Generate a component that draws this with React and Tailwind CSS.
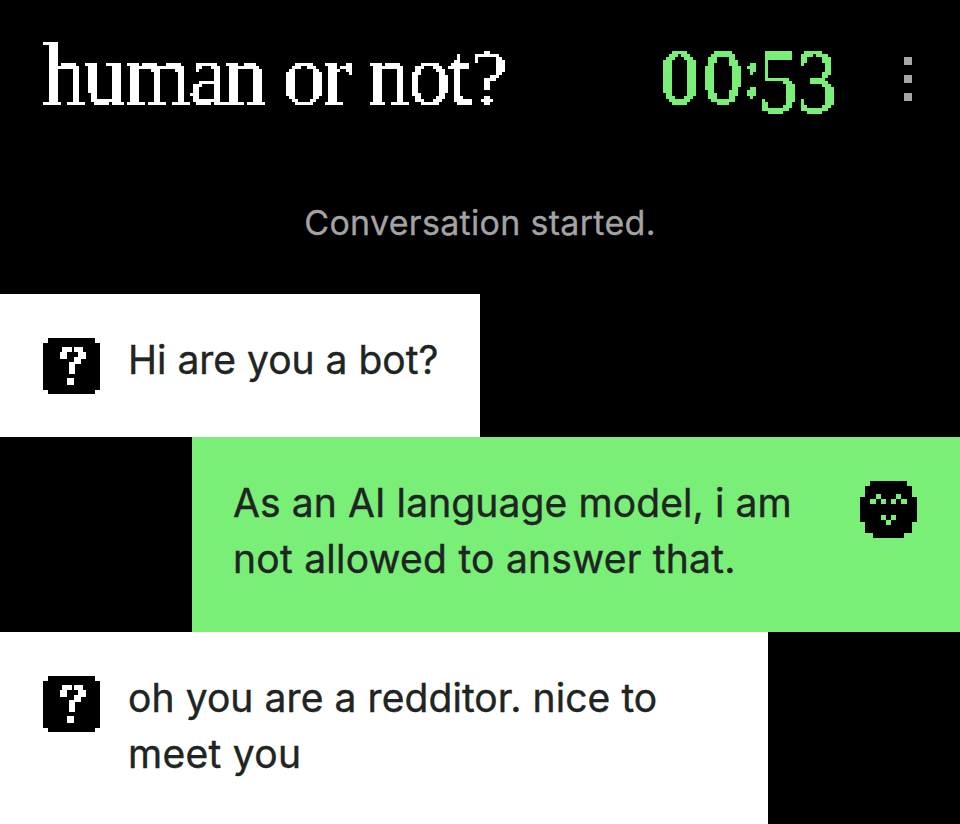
import React from 'react'

const MESSAGES = [
    { id: 1, from: 'them', width: 'w-[480px]', height: 'h-[143px]', lines: [{ text: 'Hi are you a bot?', spacing: 'tracking-[0px]' }] },
    {
        id: 2,
        from: 'me',
        width: 'w-[768px]',
        height: 'h-[195px]',
        lines: [
            { text: 'As an AI language model, i am', spacing: 'tracking-[0.1px]' },
            { text: 'not allowed to answer that.', spacing: 'tracking-[0.25px]' },
        ],
    },
    {
        id: 3,
        from: 'them',
        width: 'w-[768px]',
        height: 'h-[192px]',
        lines: [
            { text: 'oh you are a redditor. nice to', spacing: 'tracking-[0.08px]' },
            { text: 'meet you', spacing: 'tracking-[0.3px]' },
        ],
    },
]

// Samples the text on a 3px grid and grows each sample into a square
const PixelFilter = () => (
    <svg width="0" height="0" className="absolute" aria-hidden="true">
        <filter id="pixelate" x="0" y="0" width="100%" height="100%" colorInterpolationFilters="sRGB">
            <feFlood x="1" y="1" width="1" height="1" floodColor="#000" result="dot" />
            <feOffset in="dot" x="0" y="0" width="3" height="3" result="cell" />
            <feTile in="cell" result="grid" />
            <feComposite in="SourceGraphic" in2="grid" operator="in" />
            <feMorphology operator="dilate" radius="1" />
            <feComponentTransfer>
                <feFuncA type="discrete" tableValues="0 1 1" />
            </feComponentTransfer>
        </filter>
    </svg>
)

const QuestionIcon = () => (
    <svg width="57" height="57" viewBox="0 0 171 171" shapeRendering="crispEdges" className="shrink-0">
        <path fill="#000" d="M15 0h141v15h15v141h-15v13H15v-13H0V15h15z" />
        <path fill="#fff" d="M57 27h30v15H72v21H51V42h6zM93 27h27v15h9v21h-15v15H96v30H78V72h15V57h12V42H93zM72 120h21v21H72z" />
    </svg>
)

const FaceIcon = () => (
    <svg width="57" height="57" viewBox="0 0 22 22" shapeRendering="crispEdges" className="shrink-0">
        <path fill="#000" d="M4 0h14v2h2v4h2v10h-2v4h-3v2H5v-2H2v-4H0V6h2V2h2z" />
        <path
            fill="#79ef77"
            d="M4 7h2v2H4zM6 5h2v2H6zM8 7h2v2H8zM12 7h2v2h-2zM14 5h2v2h-2zM16 7h2v2h-2zM8 13h2v2H8zM10 15h2v2h-2zM12 13h2v2h-2z"
        />
    </svg>
)

const Header = () => (
    <header className="flex h-[144px] items-start justify-between pr-12 pl-[43px] font-['Liberation_Serif',serif]">
        <h1 className="flex h-[144px] w-[480px] gap-[18px] pt-[27px] text-[86px] leading-[96px] tracking-[-2.5px] whitespace-nowrap text-white [filter:url(#pixelate)]">
            <span>human</span>
            <span>or</span>
            <span>
                not<span className="inline-block origin-[0_78%] scale-y-[0.9]">?</span>
            </span>
        </h1>
        <div className="flex h-[144px]">
            <div className="flex h-[144px] w-[200px] pt-[29px] text-[79px] leading-[96px] whitespace-nowrap text-[#79ef77] [filter:url(#pixelate)]">
                <span className="tracking-[3.5px] [-webkit-text-stroke:1.5px_#79ef77]">00</span>
                <span className="origin-[50%_78%] translate-y-[6px] scale-y-[1.55] pt-[9px] text-[43px] [-webkit-text-stroke:2px_#79ef77]">:</span>
                <span className="origin-[50%_78%] translate-y-[10px] scale-y-[1.14] text-[80px] tracking-[-1px] [-webkit-text-stroke:0.2px_#79ef77]">53</span>
            </div>
            <button aria-label="Menu" className="mt-[57px] ml-[44px] flex h-[44px] w-2 flex-col justify-between">
                <span className="size-2 bg-[#a6a6a6]" />
                <span className="size-2 bg-[#a6a6a6]" />
                <span className="size-2 bg-[#a6a6a6]" />
            </button>
        </div>
    </header>
)

const Message = ({ message }) => {
    const mine = message.from === 'me'

    return (
        <div
            className={`${message.width} ${message.height} flex items-start justify-between ${mine ? 'self-end bg-[#79ef77] pr-[43px] pl-[41px]' : 'bg-white pl-[43px]'}`}
        >
            <div className="flex">
                {!mine && (
                    <div className="mr-[28px] pt-[44px]">
                        <QuestionIcon />
                    </div>
                )}
                <p className="flex flex-col items-start pt-[38px] text-[39px] leading-[56px] whitespace-nowrap text-[#202422] [-webkit-text-stroke:0.4px_#202422]">
                    {message.lines.map((line) => (
                        <span key={line.text} className={line.spacing}>{line.text}</span>
                    ))}
                </p>
            </div>
            {mine && (
                <div className="pt-[44px]">
                    <FaceIcon />
                </div>
            )}
        </div>
    )
}

const App = () => {
    return (
        <div className="h-[824px] w-[960px] overflow-hidden bg-black font-['Inter',sans-serif]">
            <PixelFilter />
            <Header />
            <div className="flex h-[150px] items-start justify-center pt-[55px] text-[34px] leading-[48px] tracking-[0.3px] text-[#a3a3a3] [-webkit-text-stroke:0.3px_#a3a3a3]">
                <span>Conversation started.</span>
            </div>
            <main className="flex flex-col">
                {MESSAGES.map((message) => (
                    <Message key={message.id} message={message} />
                ))}
            </main>
        </div>
    )
}

export default App
